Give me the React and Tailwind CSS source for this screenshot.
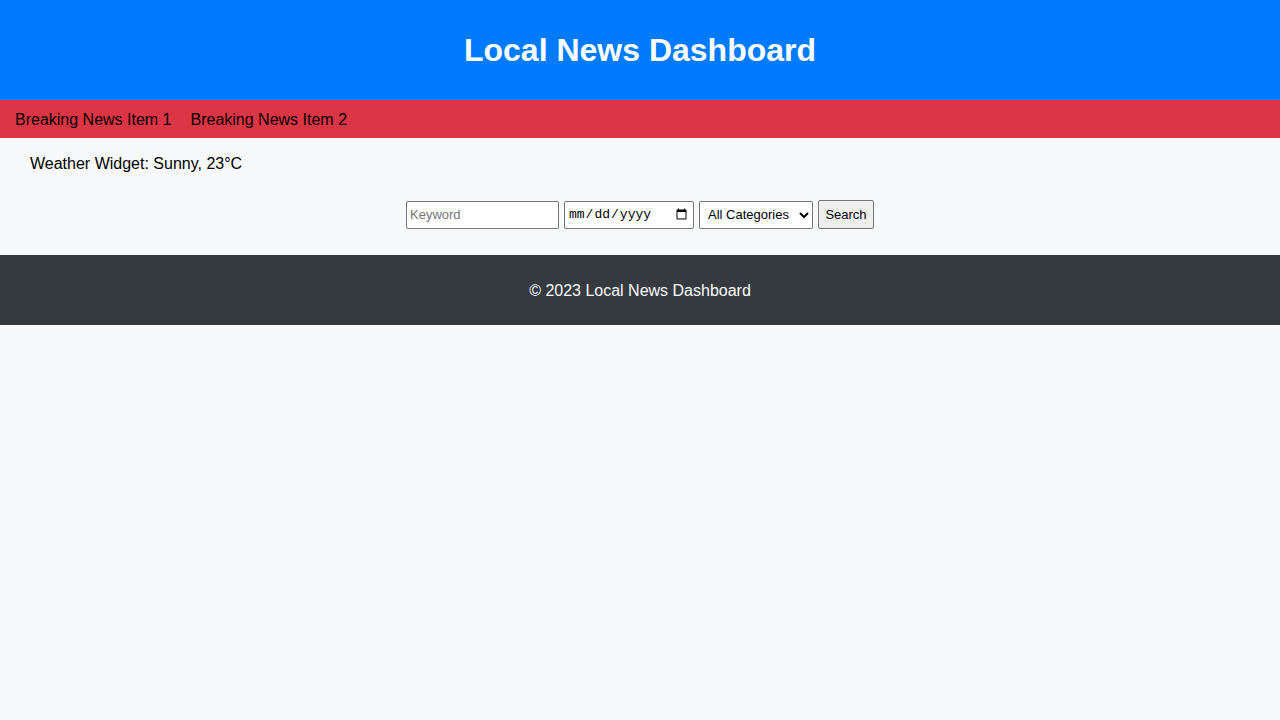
import React, { useState } from 'react';

const App = () => {
  const [keyword, setKeyword] = useState('');
  const [date, setDate] = useState('');
  const [category, setCategory] = useState('all');

  return (
    <div className="min-h-screen bg-[#f8f9fa] text-black font-['Liberation_Sans',Arial,sans-serif]">
      <header className="h-[100px] flex items-center justify-center bg-[#007bff]">
        <h1 className="text-[32px] font-bold text-white leading-[37px]">Local News Dashboard</h1>
      </header>

      <div className="h-[38px] flex items-center gap-[19px] px-[15px] pt-[2px] bg-[#dc3545] text-base">
        <span>Breaking News Item 1</span>
        <span>Breaking News Item 2</span>
      </div>

      <div className="pt-[17px] pl-[30px] text-base leading-[18px]">Weather Widget: Sunny, 23°C</div>

      <form
        onSubmit={(e) => e.preventDefault()}
        className="flex items-center justify-center gap-[5px] mt-[27px] mb-[26px] text-[13px]"
      >
        <input
          type="text"
          placeholder="Keyword"
          value={keyword}
          onChange={(e) => setKeyword(e.target.value)}
          className="w-[153px] h-[28px] px-[3px] bg-white border border-[#767676] rounded-[2px] placeholder:text-[#757575]"
        />
        <input
          type="date"
          value={date}
          onChange={(e) => setDate(e.target.value)}
          className="w-[130px] h-[28px] px-[3px] bg-white border border-[#767676] rounded-[2px] font-['Liberation_Mono',monospace]"
        />
        <select
          value={category}
          onChange={(e) => setCategory(e.target.value)}
          className="w-[114px] h-[28px] pl-[4px] bg-white border border-[#767676] rounded-[2px] appearance-auto"
        >
          <option value="all">All Categories</option>
          <option value="politics">Politics</option>
          <option value="sports">Sports</option>
        </select>
        <button
          type="submit"
          className="w-[56px] h-[29px] bg-[#efefef] border border-[#767676] rounded-[2px]"
        >
          Search
        </button>
      </form>

      <footer className="h-[70px] flex items-center justify-center pt-[2px] bg-[#343a40] text-white text-base">
        © 2023 Local News Dashboard
      </footer>
    </div>
  );
};

export default App;
